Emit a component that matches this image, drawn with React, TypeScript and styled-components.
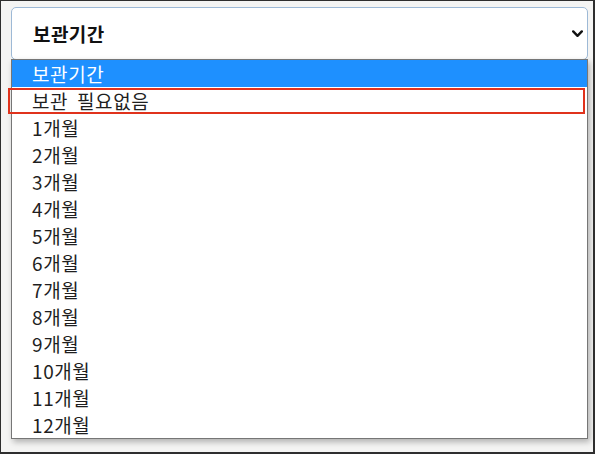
import React from "react";
import styled, { createGlobalStyle } from "styled-components";

const options = [
  "보관기간",
  "보관 필요없음",
  "1개월",
  "2개월",
  "3개월",
  "4개월",
  "5개월",
  "6개월",
  "7개월",
  "8개월",
  "9개월",
  "10개월",
  "11개월",
  "12개월"
];

const GlobalStyle = createGlobalStyle`
  html, body {
    margin: 0;
    padding: 0;
  }
  body {
    font-family: "Noto Sans CJK KR", "Noto Sans", sans-serif;
  }
`;

const App: React.FC = () => {
  return (
    <Frame>
      <GlobalStyle />
      <Field>
        <SelectBox>
          <SelectLabel>보관기간</SelectLabel>
          <Chevron viewBox="0 0 11 8" aria-hidden="true">
            <polyline points="1.2,1.4 5.5,5.8 9.8,1.4" />
          </Chevron>
        </SelectBox>
        <OptionList>
          {options.map((label, i) => (
            <OptionRow key={label} selected={i === 0}>
              {label}
            </OptionRow>
          ))}
        </OptionList>
        <Highlight />
      </Field>
    </Frame>
  );
};

const Frame = styled.div`
  box-sizing: border-box;
  width: 595px;
  height: 454px;
  border: 1px solid #2e2e2e;
  border-bottom-width: 2px;
  border-right-width: 2px;
  background: #f4f4f3;
  padding: 6px 0 0 10px;
  overflow: hidden;
`;

const Field = styled.div`
  position: relative;
  display: flex;
  flex-direction: column;
  width: 577px;
`;

const SelectBox = styled.div`
  box-sizing: border-box;
  height: 53px;
  display: flex;
  align-items: center;
  justify-content: space-between;
  padding: 0 4px 0 21px;
  background: #ffffff;
  border: 1px solid #9db9d6;
  border-radius: 5px;
`;

const SelectLabel = styled.span`
  font-size: 19px;
  font-weight: 700;
  letter-spacing: 0.4px;
  color: #111111;
  line-height: 1;
`;

const Chevron = styled.svg`
  width: 11px;
  height: 8px;
  fill: none;
  stroke: #111111;
  stroke-width: 2.4;
  stroke-linecap: round;
  stroke-linejoin: round;
`;

const OptionList = styled.div`
  box-sizing: border-box;
  margin-top: -1px;
  display: flex;
  flex-direction: column;
  background: #ffffff;
  border: 1px solid #767676;
  box-shadow: 2px 3px 6px rgba(0, 0, 0, 0.28);
`;

const OptionRow = styled.div<{ selected?: boolean }>`
  height: 27px;
  line-height: 27px;
  padding-left: 20px;
  font-size: 19px;
  letter-spacing: 0.6px;
  word-spacing: 4px;
  color: ${p => (p.selected ? "#ffffff" : "#1f1f1f")};
  background: ${p => (p.selected ? "#1e90ff" : "transparent")};
  white-space: nowrap;
`;

const Highlight = styled.div`
  position: absolute;
  left: -3px;
  top: 81px;
  width: 577px;
  height: 26px;
  box-sizing: border-box;
  border: 2px solid #e0321c;
  pointer-events: none;
`;

export default App;
